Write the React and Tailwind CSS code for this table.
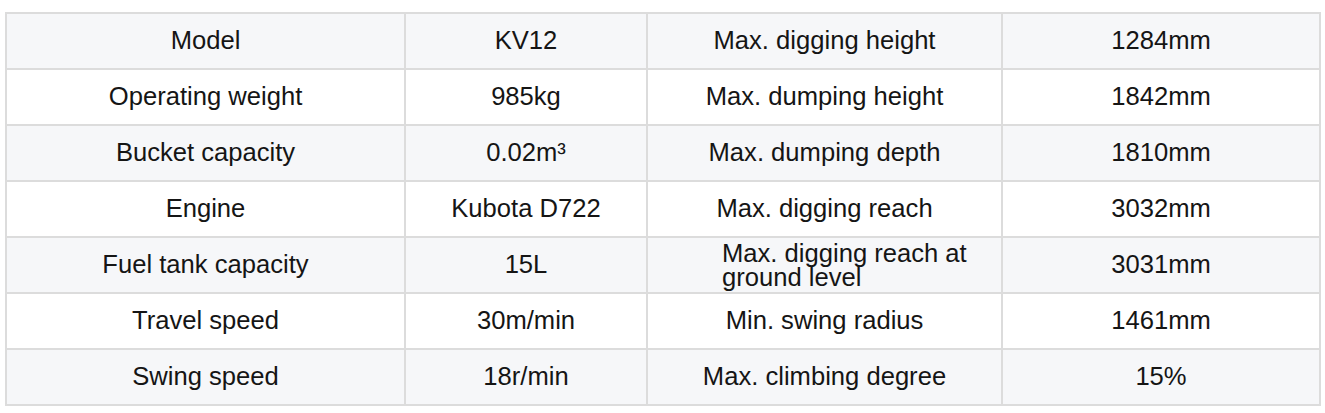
import React from 'react';

const rows = [
  ['Model', 'KV12', 'Max. digging height', '1284mm'],
  ['Operating weight', '985kg', 'Max. dumping height', '1842mm'],
  ['Bucket capacity', '0.02m³', 'Max. dumping depth', '1810mm'],
  ['Engine', 'Kubota D722', 'Max. digging reach', '3032mm'],
  ['Fuel tank capacity', '15L', 'Max. digging reach at ground level', '3031mm'],
  ['Travel speed', '30m/min', 'Min. swing radius', '1461mm'],
  ['Swing speed', '18r/min', 'Max. climbing degree', '15%'],
];

export default function App() {
  return (
    <div className="min-h-[413px] bg-white pl-[5px] pt-[12px]" style={{ fontFamily: '"Liberation Sans", Arial, sans-serif' }}>
      <table className="w-[1314px] table-fixed border-collapse text-[25.6px] text-[#151515]">
        <colgroup>
          <col className="w-[399px]" />
          <col className="w-[242px]" />
          <col className="w-[355px]" />
          <col className="w-[318px]" />
        </colgroup>
        <tbody>
          {rows.map((r, i) => (
            <tr key={r[0]} className={`h-[56px] ${i % 2 === 0 ? 'bg-[#f6f7f9]' : 'bg-white'}`}>
              <td className="border-2 border-[#dcdcdc] text-center leading-none">{r[0]}</td>
              <td className="border-2 border-[#dcdcdc] text-center leading-none">{r[1]}</td>
              {r[2].length > 25 ? (
                <td className="border-2 border-[#dcdcdc] pl-[74px] pr-2 text-left leading-[24px]">{r[2]}</td>
              ) : (
                <td className="border-2 border-[#dcdcdc] text-center leading-none">{r[2]}</td>
              )}
              <td className="border-2 border-[#dcdcdc] text-center leading-none">{r[3]}</td>
            </tr>
          ))}
        </tbody>
      </table>
    </div>
  );
}
